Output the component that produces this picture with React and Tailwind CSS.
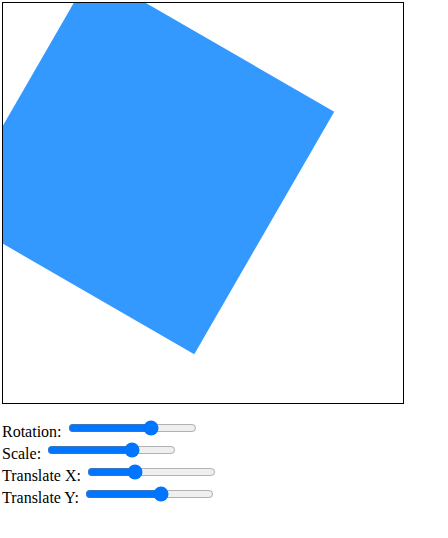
import React, { useState } from "react"

const SIZE = 400

const Slider = ({ label, min, max, step, value, onChange }) => (
  <label className="flex h-[22px] items-start">
    <span className="mt-[6px] leading-[18px] whitespace-nowrap">{label}</span>
    <input
      type="range"
      min={min}
      max={max}
      step={step}
      value={value}
      onChange={(e) => onChange(Number(e.target.value))}
      className="ml-[6px] mt-[3px] w-[129px] h-[16px] shrink-0"
    />
  </label>
)

const App = () => {
  const [rotation, setRotation] = useState(240)
  const [scale, setScale] = useState(1.4)
  const [translateX, setTranslateX] = useState(-60)
  const [translateY, setTranslateY] = useState(40)

  // square is 200 wide before scaling, centered on the canvas
  const cx = SIZE / 2 + translateX
  const cy = SIZE / 2 - translateY

  return (
    <div className="p-[2px] font-['Liberation_Serif',serif] text-base text-black">
      <div className="w-[402px] h-[402px] border border-black overflow-hidden">
        <svg width={SIZE} height={SIZE} viewBox={`0 0 ${SIZE} ${SIZE}`} className="block">
          <rect
            x={-100}
            y={-100}
            width={200}
            height={200}
            fill="#3399ff"
            transform={`translate(${cx} ${cy}) rotate(${-rotation}) scale(${scale})`}
          />
        </svg>
      </div>

      <div className="mt-[13px] flex flex-col">
        <Slider label="Rotation:" min={0} max={360} step={1} value={rotation} onChange={setRotation} />
        <Slider label="Scale:" min={0.1} max={2} step={0.1} value={scale} onChange={setScale} />
        <Slider label="Translate X:" min={-200} max={200} step={1} value={translateX} onChange={setTranslateX} />
        <Slider label="Translate Y:" min={-200} max={200} step={1} value={translateY} onChange={setTranslateY} />
      </div>
    </div>
  )
}

export default App
